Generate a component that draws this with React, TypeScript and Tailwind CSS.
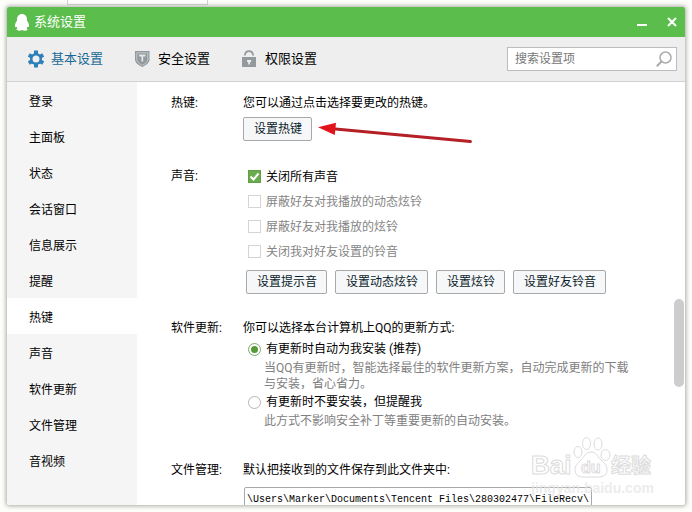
import { useState } from "react"
import type { ReactNode } from "react"

const menu = [
  "登录",
  "主面板",
  "状态",
  "会话窗口",
  "信息展示",
  "提醒",
  "热键",
  "声音",
  "软件更新",
  "文件管理",
  "音视频",
]

const sounds = [
  { label: "关闭所有声音", disabled: false },
  { label: "屏蔽好友对我播放的动态炫铃", disabled: true },
  { label: "屏蔽好友对我播放的炫铃", disabled: true },
  { label: "关闭我对好友设置的铃音", disabled: true },
]

function PenguinIcon() {
  return (
    <svg width="14" height="17" viewBox="0 0 14 17" fill="#fff">
      <path d="M7 0C4 0 2 2.300 2 5.200v1.300C.9 8 0 9.800 0 11.500c0 1 .3 1.700.7 1.700.4 0 .7-.3 1-.7.1.7.4 1.300.8 1.800-.7.300-1 .7-1 1.200 0 .8 1 1.200 2.500 1.200 1.200 0 2.300-.2 3-.7.7.5 1.800.7 3 .7 1.500 0 2.500-.4 2.500-1.200 0-.5-.3-.9-1-1.200.4-.5.7-1.100.8-1.800.3.400.6.700 1 .700.400 0 .700-.700.700-1.700 0-1.700-.900-3.500-2-5V5.200C12 2.300 10 0 7 0z" />
    </svg>
  )
}

function GearIcon() {
  return (
    <svg width="16" height="18" viewBox="0 0 16 18">
      <g stroke="#2d7fba" strokeWidth="4">
        <path d="M8 .6v16.800" />
        <path d="M.8 4.900l14.400 8.200" />
        <path d="M.8 13.100l14.400-8.200" />
      </g>
      <circle cx="8" cy="9" r="6" fill="#2d7fba" />
      <circle cx="8" cy="9" r="3.500" fill="#eee" />
    </svg>
  )
}

function ShieldIcon() {
  return (
    <svg width="16" height="18" viewBox="0 0 16 18">
      <path d="M0 1h14.500v8.500c0 3.800-4.500 6.300-7.200 7.500C4.500 15.800 0 13.300 0 9.500z" fill="#929a9e" />
      <path
        d="M1.800 2.800h11v6.700c0 2.700-3.200 4.700-5.500 5.800C5 14.200 1.800 12.200 1.800 9.500z"
        fill="none"
        stroke="#c3c8ca"
        strokeWidth="1"
      />
      <path d="M4 5.500h6.500M7.300 5.500v6" stroke="#e3e6e7" strokeWidth="1.800" fill="none" />
    </svg>
  )
}

function LockIcon() {
  return (
    <svg width="16" height="18" viewBox="0 0 16 18">
      <path d="M2.800 5.500C3.500-.3 10.500-.3 11.200 5.500" fill="none" stroke="#929a9e" strokeWidth="1.800" />
      <path d="M0 7h14v10H0z" fill="#929a9e" />
      <path d="M5 10h4.200v1.500L7.900 12.500v2H6.300v-2L5 11.500z" fill="#eee" />
    </svg>
  )
}

const tabs = [
  { label: "基本设置", icon: <GearIcon /> },
  { label: "安全设置", icon: <ShieldIcon /> },
  { label: "权限设置", icon: <LockIcon /> },
]

function Button({ children }: { children: ReactNode }) {
  return (
    <button className="h-6 rounded-xs border border-[#a9a9a9] bg-[#f6f7f8] pl-[10px] pr-[9px] text-[#0a1c2b] hover:bg-white">
      {children}
    </button>
  )
}

function Section({ title, children }: { title: string; children: ReactNode }) {
  return (
    <section className="flex leading-5">
      <h2 className="w-[72px] shrink-0">{title}</h2>
      <div className="min-w-0 flex-1">{children}</div>
    </section>
  )
}

function Check({ label, disabled }: { label: string; disabled: boolean }) {
  return (
    <label className={`flex h-[25px] items-center gap-[5px] pl-[5px] ${disabled ? "text-[#858585]" : ""}`}>
      <span className="grid">
        <input
          type="checkbox"
          defaultChecked={!disabled}
          disabled={disabled}
          className="peer col-start-1 row-start-1 size-[13px] appearance-none border border-[#d4d4d4] bg-white checked:border-[#5f9f45] checked:bg-[#6bab50]"
        />
        <svg
          width="13"
          height="13"
          viewBox="0 0 13 13"
          className="pointer-events-none invisible col-start-1 row-start-1 peer-checked:visible"
        >
          <path d="M2.500 6.500l3 3 5-6" fill="none" stroke="#fff" strokeWidth="2" />
        </svg>
      </span>
      {label}
    </label>
  )
}

function Radio({ label, note, checked }: { label: string; note: string; checked?: boolean }) {
  return (
    <div>
      <label className="flex items-center gap-[5px] pl-[5px]">
        <input
          type="radio"
          name="update"
          defaultChecked={checked}
          className="grid size-[13px] appearance-none place-items-center rounded-full border border-[#b5b5b5] bg-white checked:border-[#7fa86c] checked:before:size-[7px] checked:before:rounded-full checked:before:bg-[#569a38]"
        />
        {label}
      </label>
      <p className="ml-[21px] mt-px max-w-[368px] leading-4 text-[#808080]">{note}</p>
    </div>
  )
}

function Arrow() {
  return (
    <svg className="pointer-events-none absolute left-[75px] top-[5px]" width="156" height="24" viewBox="0 0 156 24">
      <path d="M12 6.500L152.500 19.500" stroke="#b51f26" strokeWidth="2.800" strokeLinecap="round" />
      <path d="M0 5.300L18 .7 16.800 13z" fill="#e3131b" />
    </svg>
  )
}

function Watermark() {
  return (
    <svg
      className="pointer-events-none absolute bottom-[14px] right-[34px]"
      width="132"
      height="64"
      viewBox="0 0 132 64"
      fill="#fff"
      fillOpacity="0.7"
      stroke="#dcdcdc"
      strokeWidth="1"
      fontFamily="'Liberation Sans', 'Noto Sans CJK SC', sans-serif"
      fontWeight="bold"
    >
      <text x="5" y="40" fontSize="26">Bai</text>
      <ellipse cx="52" cy="18" rx="4" ry="5.500" />
      <ellipse cx="60.500" cy="9.500" rx="4" ry="6" />
      <ellipse cx="72" cy="10" rx="4" ry="6" />
      <ellipse cx="79.500" cy="21" rx="4.500" ry="5.500" />
      <path d="M65 18c-5 0-7 5-10 8-3 3-6 5-6 10 0 8 8 7 16 7s16 1 16-7c0-5-3-7-6-10-3-3-5-8-10-8z" />
      <text x="55" y="39" fontSize="16">du</text>
      <text x="85" y="39" fontSize="20">经验</text>
      <text x="5" y="59" fontSize="14" fill="#e4e4e4" stroke="none">jingyan.baidu.com</text>
    </svg>
  )
}

export default function App() {
  const [current, setCurrent] = useState("热键")

  return (
    <div className="relative h-screen overflow-hidden bg-[#fdfdfa] p-[7px] font-['Roboto','Noto_Sans_CJK_SC',sans-serif] text-xs text-black">
      <div className="absolute left-[67px] top-0 h-[5px] w-[141px] border-x border-b border-[#d0d0d0] bg-white" />

      <div className="relative flex h-full flex-col overflow-hidden rounded-xs bg-white shadow-[0_0_4px_1px_#a8aaa4]">
        <header className="flex h-[30px] shrink-0 items-center bg-[#5bbd4b] pl-2 pr-[8px] text-white">
          <PenguinIcon />
          <h1 className="ml-[5px] flex-1 text-[13px]">系统设置</h1>
          <button aria-label="最小化" className="mr-5">
            <svg width="10" height="10" viewBox="0 0 10 10">
              <path d="M0 8h10" stroke="#fff" strokeWidth="2" />
            </svg>
          </button>
          <button aria-label="关闭">
            <svg width="10" height="10" viewBox="0 0 10 10">
              <path d="M1 1l8 8M9 1L1 9" stroke="#fff" strokeWidth="2" />
            </svg>
          </button>
        </header>

        <div className="flex h-[45px] shrink-0 items-center border-b border-[#d2d2d2] bg-[#eee] pl-[21px] pr-2">
          <nav className="flex flex-1 gap-8 text-[13px]">
            {tabs.map((tab, i) => (
              <button key={tab.label} className={`flex items-center gap-[7px] ${i === 0 ? "text-[#1b6a96]" : ""}`}>
                {tab.icon}
                {tab.label}
              </button>
            ))}
          </nav>
          <div className="flex h-6 w-[170px] items-center border border-[#bdbdbd] bg-white pl-[7px] pr-1">
            <input
              type="text"
              aria-label="搜索设置项"
              placeholder="搜索设置项"
              className="min-w-0 flex-1 outline-none placeholder:text-[#777]"
            />
            <svg width="16" height="16" viewBox="0 0 16 16" fill="none" stroke="#aaa">
              <circle cx="9.500" cy="6.500" r="5.500" strokeWidth="1.500" />
              <path d="M5.500 10.500L.8 15.200" strokeWidth="2" />
            </svg>
          </div>
        </div>

        <div className="flex min-h-0 flex-1">
          <nav className="w-[130px] shrink-0 bg-[#f5f5f6]">
            {menu.map((item) => (
              <a
                key={item}
                href="#"
                onClick={() => setCurrent(item)}
                className={`flex h-9 items-center pl-[22px] pt-[3px] ${item === current ? "bg-white" : ""}`}
              >
                {item}
              </a>
            ))}
          </nav>

          <main className="relative min-w-0 flex-1 overflow-hidden pl-[34px] pt-[11px]">
            <Section title="热键:">
              <p>您可以通过点击选择要更改的热键。</p>
              <div className="relative mt-1 flex">
                <Button>设置热键</Button>
                <Arrow />
              </div>
            </Section>

            <div className="mt-[25px]">
              <Section title="声音:">
                <div className="-mt-[2px]">
                  {sounds.map((sound) => (
                    <Check key={sound.label} {...sound} />
                  ))}
                </div>
                <div className="mt-[6px] flex gap-2 pl-[3px]">
                  <Button>设置提示音</Button>
                  <Button>设置动态炫铃</Button>
                  <Button>设置炫铃</Button>
                  <Button>设置好友铃音</Button>
                </div>
              </Section>
            </div>

            <div className="mt-6">
              <Section title="软件更新:">
                <p>你可以选择本台计算机上QQ的更新方式:</p>
                <div className="mt-px flex flex-col">
                  <Radio
                    checked
                    label="有更新时自动为我安装 (推荐)"
                    note="当QQ有更新时，智能选择最佳的软件更新方案，自动完成更新的下载与安装，省心省力。"
                  />
                  <Radio label="有更新时不要安装，但提醒我" note="此方式不影响安全补丁等重要更新的自动安装。" />
                </div>
              </Section>
            </div>

            <div className="mt-[31px]">
              <Section title="文件管理:">
                <label htmlFor="path">默认把接收到的文件保存到此文件夹中:</label>
                <input
                  id="path"
                  type="text"
                  readOnly
                  value="\Users\Marker\Documents\Tencent Files\280302477\FileRecv\"
                  className="ml-px mt-[7px] block h-6 w-[348px] rounded-xs border border-[#a9a9a9] px-[2px] font-['Liberation_Mono',monospace] text-[10px]"
                />
              </Section>
            </div>

            <div className="absolute right-px top-[217px] h-[88px] w-[10px] rounded-full bg-[#cdcdcd]" />
          </main>
        </div>
      </div>

      <Watermark />
    </div>
  )
}
